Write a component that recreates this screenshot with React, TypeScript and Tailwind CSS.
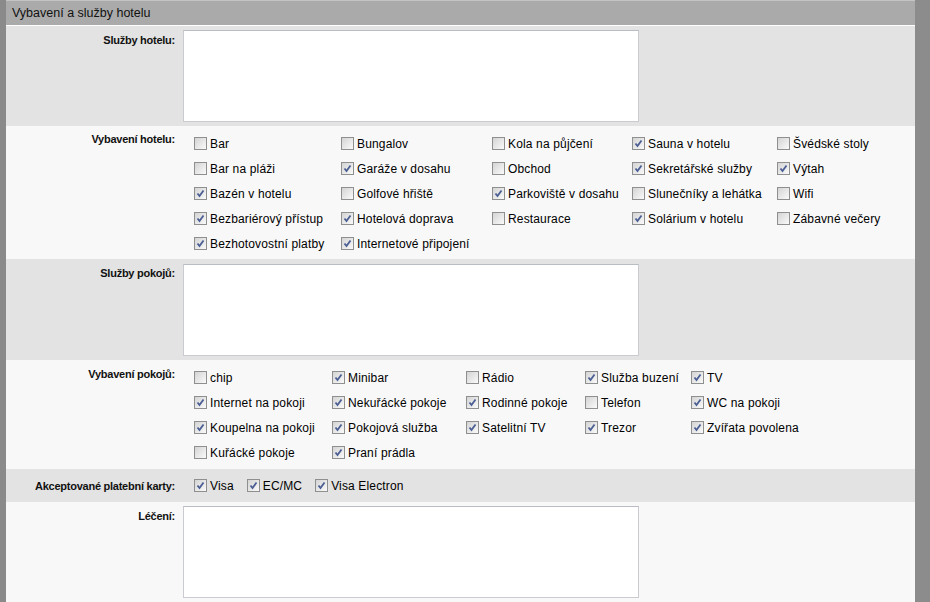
import type { ReactNode } from "react";

type Item = [string, boolean];

const hotelItems: Item[][] = [
  [["Bar", false], ["Bar na pláži", false], ["Bazén v hotelu", true], ["Bezbariérový přístup", true], ["Bezhotovostní platby", true]],
  [["Bungalov", false], ["Garáže v dosahu", true], ["Golfové hřiště", false], ["Hotelová doprava", true], ["Internetové připojení", true]],
  [["Kola na půjčení", false], ["Obchod", false], ["Parkoviště v dosahu", true], ["Restaurace", false]],
  [["Sauna v hotelu", true], ["Sekretářské služby", true], ["Slunečníky a lehátka", false], ["Solárium v hotelu", true]],
  [["Švédské stoly", false], ["Výtah", true], ["Wifi", false], ["Zábavné večery", false]],
];

const roomItems: Item[][] = [
  [["chip", false], ["Internet na pokoji", true], ["Koupelna na pokoji", true], ["Kuřácké pokoje", false]],
  [["Minibar", true], ["Nekuřácké pokoje", true], ["Pokojová služba", true], ["Praní prádla", true]],
  [["Rádio", false], ["Rodinné pokoje", true], ["Satelitní TV", true]],
  [["Služba buzení", true], ["Telefon", false], ["Trezor", true]],
  [["TV", true], ["WC na pokoji", true], ["Zvířata povolena", true]],
];

const cards: Item[] = [["Visa", true], ["EC/MC", true], ["Visa Electron", true]];

function Check({ checked }: { checked: boolean }) {
  return (
    <span className="relative inline-block w-[13px] h-[13px] border border-[#8e8f8f] bg-gradient-to-br from-[#d4d4d4] to-[#fafafa] shrink-0">
      {checked && (
        <svg viewBox="0 0 11 11" className="absolute inset-0 w-[11px] h-[11px]">
          <path d="M2.5 5.5 L4.5 8 L8.5 2.5" fill="none" stroke="#4b5e94" strokeWidth="1.8" />
        </svg>
      )}
    </span>
  );
}

function CheckLabel({ item }: { item: Item }) {
  return (
    <div className="flex items-center gap-[3px] h-[25px] whitespace-nowrap tracking-[0.15px]">
      <Check checked={item[1]} />
      <span>{item[0]}</span>
    </div>
  );
}

function Row({ label, bg, children, labelPad }: { label: string; bg: string; children: ReactNode; labelPad: string }) {
  return (
    <div className={`flex shrink-0 ${bg}`}>
      <div className={`w-[177px] shrink-0 pr-[8px] text-right text-[11px] font-bold text-[#111] tracking-[-0.25px] ${labelPad}`}>
        {label}
      </div>
      <div className="flex-1">{children}</div>
    </div>
  );
}

function Area({ top = "mt-[4px]" }: { top?: string }) {
  return <div className={`w-[456px] h-[92px] mb-[4px] bg-white border border-[#c9cbd0] border-t-[#b9bcc2] ${top}`} />;
}

export default function App() {
  return (
    <div
      className="w-[930px] h-[602px] overflow-hidden bg-[#8c8c8c] flex text-[12px] text-black"
      style={{ fontFamily: '"Liberation Sans", Arial, sans-serif' }}
    >
      <div className="w-[6px] shrink-0 bg-[#8a8a8a]" />
      <div className="w-[909px] shrink-0 flex flex-col bg-[#f8f8f8]">
        <div className="h-[25px] shrink-0 bg-[#aaaaaa] border-t border-[#c4c4c4] pl-[6px] pt-[1px] flex items-center text-[12.5px] text-[#111]">
          Vybavení a služby hotelu
        </div>
        <div className="h-[1px] shrink-0 bg-white" />
        <Row label="Služby hotelu:" bg="bg-[#e3e3e3]" labelPad="pt-[6px]">
          <Area />
        </Row>
        <Row label="Vybavení hotelu:" bg="bg-[#f8f8f8]" labelPad="pt-[5px]">
          <div className="flex pl-[11px] pt-[5px] pb-[3px]">
            {hotelItems.map((col, i) => (
              <div key={i} className={["w-[147px]", "w-[151px]", "w-[140px]", "w-[145px]", "w-[130px]"][i]}>
                {col.map((it) => (
                  <CheckLabel key={it[0]} item={it} />
                ))}
              </div>
            ))}
          </div>
        </Row>
        <Row label="Služby pokojů:" bg="bg-[#e3e3e3]" labelPad="pt-[6px]">
          <Area top="mt-[5px]" />
        </Row>
        <Row label="Vybavení pokojů:" bg="bg-[#f8f8f8]" labelPad="pt-[6px]">
          <div className="flex pl-[11px] pt-[5px] pb-[4px]">
            {roomItems.map((col, i) => (
              <div key={i} className={["w-[138px]", "w-[134px]", "w-[119px]", "w-[106px]", "w-[130px]"][i]}>
                {col.map((it) => (
                  <CheckLabel key={it[0]} item={it} />
                ))}
              </div>
            ))}
          </div>
        </Row>
        <Row label="Akceptované platební karty:" bg="bg-[#e3e3e3]" labelPad="pt-[9px]">
          <div className="flex pl-[11px] pt-[4px] pb-[4px] gap-x-[13px]">
            {cards.map((it) => (
              <CheckLabel key={it[0]} item={it} />
            ))}
          </div>
        </Row>
        <Row label="Léčení:" bg="bg-[#f8f8f8]" labelPad="pt-[6px]">
          <Area />
        </Row>
      </div>
    </div>
  );
}
